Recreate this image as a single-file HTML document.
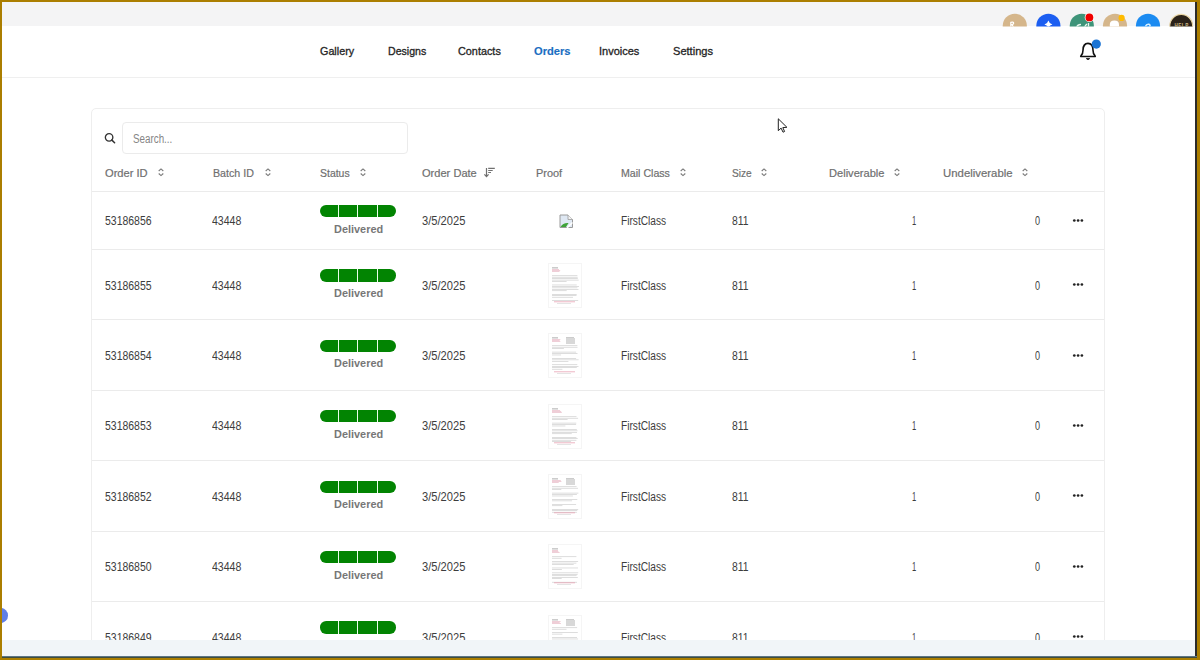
<!DOCTYPE html>
<html><head><meta charset="utf-8">
<style>
*{box-sizing:border-box}
html,body{margin:0;padding:0}
body{width:1200px;height:660px;position:relative;overflow:hidden;background:#ab7e00;font-family:"Liberation Sans",sans-serif}
.win{position:absolute;left:2px;top:2px;width:1193px;height:654px;background:#fff;overflow:hidden}
.edgeR{position:absolute;left:1195px;top:2px;width:2px;height:656px;background:#2a2a2a}
.edgeB{position:absolute;left:2px;top:656px;width:1195px;height:2px;background:linear-gradient(#5d7684 0 50%,#3e4c40 50% 100%)}
.topbar{position:absolute;left:2px;top:2px;width:1193px;height:24px;background:#f4f4f5}
.av{position:absolute;width:24px;height:24px;border-radius:50%;top:12px}
.hdrline{position:absolute;left:2px;top:77px;width:1193px;height:1px;background:#efefef}
.t{position:absolute;white-space:nowrap;transform-origin:0 0;display:inline-block}
.card{position:absolute;left:91px;top:108px;width:1014px;height:545px;border:1px solid #eeeeee;border-radius:5px;background:#fff}
.search{position:absolute;left:122px;top:122px;width:286px;height:32px;border:1px solid #ebebeb;border-radius:4px;background:#fff}
.hl{position:absolute;left:92px;width:1012px;height:1px;background:#ebebeb}
.ic{position:absolute;overflow:visible}
.bar{position:absolute;left:319.8px;width:76.3px;height:12.4px;border-radius:6.2px;background:#028402;overflow:hidden}
.bar i{position:absolute;top:0;width:1px;height:13px;background:#eaffea}
.bottombar{position:absolute;left:2px;top:640px;width:1193px;height:16px;background:#f1f5f8}
</style></head><body>
<div class="win"></div>
<div style="position:absolute;left:2px;top:2px;width:1193px;height:654px;overflow:hidden"><div style="position:absolute;left:-2px;top:-2px;width:1200px;height:660px">
<div class="topbar"></div>
<svg class="ic" style="left:2px;top:2px" width="1193" height="26" viewBox="0 0 1193 26">
 <defs><clipPath id="tc"><rect x="0" y="0" width="1193" height="24.5"/></clipPath></defs>
 <g clip-path="url(#tc)"><g transform="translate(-2,-2)">
  <circle cx="1014.8" cy="25.8" r="12.1" fill="#d5b68b"/>
  <path d="M1010.8 27.5 V22.4 Q1013.4 21.4 1013.7 23.2 Q1013.4 24.6 1011.8 24.6 L1013.8 27.5" fill="none" stroke="#fff" stroke-width="1.2"/>
  <circle cx="1048.4" cy="25.8" r="12.1" fill="#1c5ef1"/>
  <path d="M1048.4 20.6 Q1049.1 23.6 1052.4 24.4 Q1049.1 25.2 1048.4 28.2 Q1047.7 25.2 1044.4 24.4 Q1047.7 23.6 1048.4 20.6 Z" fill="#fff"/>
  <circle cx="1081.8" cy="25.8" r="12.1" fill="#3e9479"/>
  <path d="M1076.5 27.5 Q1077.8 24.3 1081 24.6 M1084.2 27.5 L1086.8 23.8 M1088.5 23 V27.5" fill="none" stroke="#e9f5ef" stroke-width="1.4"/>
  <circle cx="1089.4" cy="17.4" r="4.7" fill="#fff"/>
  <circle cx="1089.4" cy="17.4" r="3.9" fill="#f00000"/>
  <circle cx="1115" cy="25.8" r="12.1" fill="#d5b68b"/>
  <path d="M1109.8 27.5 V24.8 Q1109.8 20.6 1114.4 20.6 Q1119 20.6 1119 24.8 V27.5 Z" fill="#fff"/>
  <circle cx="1121.6" cy="17.9" r="3.1" fill="#ffbb00"/>
  <circle cx="1148" cy="25.8" r="12.1" fill="#1b8bf1"/>
  <path d="M1145.4 26.6 Q1146.4 23.8 1148.8 24.2 Q1150.8 24.9 1149.6 26.8 Q1147.8 28.6 1146 27.9" fill="none" stroke="#d8f0ff" stroke-width="1.5"/>
  <circle cx="1181.2" cy="25.8" r="11.4" fill="#2b2219" stroke="#e9d6a6" stroke-width="1.1"/>
  <text x="1181.6" y="26.6" font-family="Liberation Sans" font-size="4.6" font-weight="700" fill="#cdb985" text-anchor="middle" letter-spacing="0.5">HELP</text>
 </g></g>
</svg>
<div class="hdrline"></div>
<div class="card"></div>
<div class="search"></div>
<svg class="ic" style="left:104px;top:132px" width="13" height="13" viewBox="0 0 13 13"><circle cx="5.1" cy="5.3" r="3.75" fill="none" stroke="#333" stroke-width="1.35"/><path d="M7.9 8.1 L10.6 10.8" stroke="#333" stroke-width="1.5" stroke-linecap="round"/></svg>
<div class="hl" style="top:191px"></div>
<div class="hl" style="top:249px"></div>
<div class="hl" style="top:319px"></div>
<div class="hl" style="top:390px"></div>
<div class="hl" style="top:460px"></div>
<div class="hl" style="top:531px"></div>
<div class="hl" style="top:601px"></div>
<svg class="ic" style="left:156.7px;top:166px" width="8" height="12" viewBox="0 0 8 12"><path d="M1.7 5.0 L4 2.95 L6.3 5.0 M1.7 7.5 L4 9.6 L6.3 7.5" fill="none" stroke="#7a7a7a" stroke-width="1.1"/></svg>
<svg class="ic" style="left:263.5px;top:166px" width="8" height="12" viewBox="0 0 8 12"><path d="M1.7 5.0 L4 2.95 L6.3 5.0 M1.7 7.5 L4 9.6 L6.3 7.5" fill="none" stroke="#7a7a7a" stroke-width="1.1"/></svg>
<svg class="ic" style="left:359.2px;top:166px" width="8" height="12" viewBox="0 0 8 12"><path d="M1.7 5.0 L4 2.95 L6.3 5.0 M1.7 7.5 L4 9.6 L6.3 7.5" fill="none" stroke="#7a7a7a" stroke-width="1.1"/></svg>
<svg class="ic" style="left:679.3px;top:166px" width="8" height="12" viewBox="0 0 8 12"><path d="M1.7 5.0 L4 2.95 L6.3 5.0 M1.7 7.5 L4 9.6 L6.3 7.5" fill="none" stroke="#7a7a7a" stroke-width="1.1"/></svg>
<svg class="ic" style="left:760.2px;top:166px" width="8" height="12" viewBox="0 0 8 12"><path d="M1.7 5.0 L4 2.95 L6.3 5.0 M1.7 7.5 L4 9.6 L6.3 7.5" fill="none" stroke="#7a7a7a" stroke-width="1.1"/></svg>
<svg class="ic" style="left:892.9px;top:166px" width="8" height="12" viewBox="0 0 8 12"><path d="M1.7 5.0 L4 2.95 L6.3 5.0 M1.7 7.5 L4 9.6 L6.3 7.5" fill="none" stroke="#7a7a7a" stroke-width="1.1"/></svg>
<svg class="ic" style="left:1021.1px;top:166px" width="8" height="12" viewBox="0 0 8 12"><path d="M1.7 5.0 L4 2.95 L6.3 5.0 M1.7 7.5 L4 9.6 L6.3 7.5" fill="none" stroke="#7a7a7a" stroke-width="1.1"/></svg>
<svg class="ic" style="left:482px;top:165px" width="16" height="14" viewBox="0 0 16 14"><path d="M4.5 3 V11.5 M2.4 9.3 L4.5 11.6 L6.6 9.3" fill="none" stroke="#707070" stroke-width="1.2"/><path d="M6.2 3.4 H12.8 M6.2 5.5 H10.7 M6.2 7.5 H9" fill="none" stroke="#707070" stroke-width="1.2"/></svg>
<div class="bar" style="top:204.9px"><i style="left:18.1px"></i><i style="left:37.5px"></i><i style="left:57px"></i></div>
<div class="bar" style="top:269.3px"><i style="left:18.1px"></i><i style="left:37.5px"></i><i style="left:57px"></i></div>
<div class="bar" style="top:339.7px"><i style="left:18.1px"></i><i style="left:37.5px"></i><i style="left:57px"></i></div>
<div class="bar" style="top:410.1px"><i style="left:18.1px"></i><i style="left:37.5px"></i><i style="left:57px"></i></div>
<div class="bar" style="top:480.5px"><i style="left:18.1px"></i><i style="left:37.5px"></i><i style="left:57px"></i></div>
<div class="bar" style="top:550.9px"><i style="left:18.1px"></i><i style="left:37.5px"></i><i style="left:57px"></i></div>
<div class="bar" style="top:621.3px"><i style="left:18.1px"></i><i style="left:37.5px"></i><i style="left:57px"></i></div>
<svg class="ic" style="left:1072px;top:217.8px" width="13" height="5" viewBox="0 0 13 5"><circle cx="2.3" cy="2.5" r="1.35" fill="#222"/><circle cx="6.1" cy="2.5" r="1.35" fill="#222"/><circle cx="9.9" cy="2.5" r="1.35" fill="#222"/></svg>
<svg class="ic" style="left:1072px;top:282.2px" width="13" height="5" viewBox="0 0 13 5"><circle cx="2.3" cy="2.5" r="1.35" fill="#222"/><circle cx="6.1" cy="2.5" r="1.35" fill="#222"/><circle cx="9.9" cy="2.5" r="1.35" fill="#222"/></svg>
<svg class="ic" style="left:1072px;top:352.6px" width="13" height="5" viewBox="0 0 13 5"><circle cx="2.3" cy="2.5" r="1.35" fill="#222"/><circle cx="6.1" cy="2.5" r="1.35" fill="#222"/><circle cx="9.9" cy="2.5" r="1.35" fill="#222"/></svg>
<svg class="ic" style="left:1072px;top:423.0px" width="13" height="5" viewBox="0 0 13 5"><circle cx="2.3" cy="2.5" r="1.35" fill="#222"/><circle cx="6.1" cy="2.5" r="1.35" fill="#222"/><circle cx="9.9" cy="2.5" r="1.35" fill="#222"/></svg>
<svg class="ic" style="left:1072px;top:493.4px" width="13" height="5" viewBox="0 0 13 5"><circle cx="2.3" cy="2.5" r="1.35" fill="#222"/><circle cx="6.1" cy="2.5" r="1.35" fill="#222"/><circle cx="9.9" cy="2.5" r="1.35" fill="#222"/></svg>
<svg class="ic" style="left:1072px;top:563.8px" width="13" height="5" viewBox="0 0 13 5"><circle cx="2.3" cy="2.5" r="1.35" fill="#222"/><circle cx="6.1" cy="2.5" r="1.35" fill="#222"/><circle cx="9.9" cy="2.5" r="1.35" fill="#222"/></svg>
<svg class="ic" style="left:1072px;top:634.2px" width="13" height="5" viewBox="0 0 13 5"><circle cx="2.3" cy="2.5" r="1.35" fill="#222"/><circle cx="6.1" cy="2.5" r="1.35" fill="#222"/><circle cx="9.9" cy="2.5" r="1.35" fill="#222"/></svg>
<svg class="ic" style="left:548px;top:262.7px" width="34" height="45" viewBox="0 0 34 45"><rect x="0.5" y="0.5" width="33" height="44" fill="#fff" stroke="#f5f5f5"/><rect x="4" y="4.5" width="6" height="0.8" fill="#9a9a9a"/><rect x="4" y="6.0" width="7.0" height="0.55" fill="#e2a6b6"/><rect x="4" y="7.0" width="8.2" height="0.55" fill="#e2a6b6"/><rect x="4" y="8.0" width="7.5" height="0.55" fill="#e2a6b6"/><rect x="4" y="12.5" width="25.4" height="0.55" fill="#c2c2c2"/><rect x="4" y="13.9" width="25.7" height="0.55" fill="#c2c2c2"/><rect x="4" y="15.4" width="25.8" height="0.55" fill="#c2c2c2"/><rect x="4" y="16.8" width="26.7" height="0.55" fill="#c2c2c2"/><rect x="4" y="18.3" width="14.6" height="0.55" fill="#c2c2c2"/><rect x="4" y="21.7" width="24.7" height="0.55" fill="#c2c2c2"/><rect x="4" y="23.2" width="27.0" height="0.55" fill="#c2c2c2"/><rect x="4" y="24.6" width="25.4" height="0.55" fill="#c2c2c2"/><rect x="4" y="26.1" width="26.5" height="0.55" fill="#c2c2c2"/><rect x="4" y="27.5" width="14.7" height="0.55" fill="#c2c2c2"/><rect x="4" y="31.0" width="24.7" height="0.55" fill="#c2c2c2"/><rect x="4" y="32.4" width="24.5" height="0.55" fill="#c2c2c2"/><rect x="4" y="33.9" width="21.0" height="0.55" fill="#c2c2c2"/><rect x="4" y="37.4" width="26.2" height="0.55" fill="#c2c2c2"/><rect x="6" y="38.5" width="21" height="0.7" fill="#e596aa"/><rect x="9" y="40" width="14" height="0.5" fill="#c8c8c8"/></svg>
<svg class="ic" style="left:548px;top:333.1px" width="34" height="45" viewBox="0 0 34 45"><rect x="0.5" y="0.5" width="33" height="44" fill="#fff" stroke="#f5f5f5"/><rect x="4" y="4.5" width="6" height="0.8" fill="#9a9a9a"/><rect x="4" y="6.0" width="8.3" height="0.55" fill="#e2a6b6"/><rect x="4" y="7.0" width="7.7" height="0.55" fill="#e2a6b6"/><rect x="4" y="8.0" width="8.3" height="0.55" fill="#e2a6b6"/><rect x="18" y="5" width="9" height="6" fill="#d8d8d8"/><rect x="18" y="4" width="8" height="0.6" fill="#aaa"/><rect x="4" y="12.5" width="25.4" height="0.55" fill="#c2c2c2"/><rect x="4" y="13.9" width="25.5" height="0.55" fill="#c2c2c2"/><rect x="4" y="15.4" width="11.9" height="0.55" fill="#c2c2c2"/><rect x="4" y="18.8" width="24.1" height="0.55" fill="#c2c2c2"/><rect x="4" y="20.3" width="25.5" height="0.55" fill="#c2c2c2"/><rect x="4" y="21.7" width="9.1" height="0.55" fill="#c2c2c2"/><rect x="4" y="25.2" width="24.1" height="0.55" fill="#c2c2c2"/><rect x="4" y="26.6" width="26.6" height="0.55" fill="#c2c2c2"/><rect x="4" y="28.1" width="16.4" height="0.55" fill="#c2c2c2"/><rect x="4" y="31.5" width="25.3" height="0.55" fill="#c2c2c2"/><rect x="4" y="33.0" width="26.5" height="0.55" fill="#c2c2c2"/><rect x="4" y="34.4" width="24.8" height="0.55" fill="#c2c2c2"/><rect x="4" y="35.9" width="10.4" height="0.55" fill="#c2c2c2"/><rect x="6" y="38.5" width="21" height="0.7" fill="#e596aa"/><rect x="9" y="40" width="14" height="0.5" fill="#c8c8c8"/></svg>
<svg class="ic" style="left:548px;top:403.5px" width="34" height="45" viewBox="0 0 34 45"><rect x="0.5" y="0.5" width="33" height="44" fill="#fff" stroke="#f5f5f5"/><rect x="4" y="4.5" width="6" height="0.8" fill="#9a9a9a"/><rect x="4" y="6.0" width="8.1" height="0.55" fill="#e2a6b6"/><rect x="4" y="7.0" width="9.2" height="0.55" fill="#e2a6b6"/><rect x="4" y="8.0" width="9.8" height="0.55" fill="#e2a6b6"/><rect x="4" y="12.5" width="24.5" height="0.55" fill="#c2c2c2"/><rect x="4" y="13.9" width="26.1" height="0.55" fill="#c2c2c2"/><rect x="4" y="15.4" width="15.6" height="0.55" fill="#c2c2c2"/><rect x="4" y="18.8" width="24.3" height="0.55" fill="#c2c2c2"/><rect x="4" y="20.3" width="24.1" height="0.55" fill="#c2c2c2"/><rect x="4" y="21.7" width="13.4" height="0.55" fill="#c2c2c2"/><rect x="4" y="25.2" width="24.8" height="0.55" fill="#c2c2c2"/><rect x="4" y="26.6" width="25.5" height="0.55" fill="#c2c2c2"/><rect x="4" y="28.1" width="25.0" height="0.55" fill="#c2c2c2"/><rect x="4" y="29.5" width="19.8" height="0.55" fill="#c2c2c2"/><rect x="4" y="33.0" width="24.4" height="0.55" fill="#c2c2c2"/><rect x="4" y="34.4" width="25.7" height="0.55" fill="#c2c2c2"/><rect x="4" y="35.9" width="24.4" height="0.55" fill="#c2c2c2"/><rect x="4" y="37.4" width="19.1" height="0.55" fill="#c2c2c2"/><rect x="6" y="38.5" width="21" height="0.7" fill="#e596aa"/><rect x="9" y="40" width="14" height="0.5" fill="#c8c8c8"/></svg>
<svg class="ic" style="left:548px;top:473.9px" width="34" height="45" viewBox="0 0 34 45"><rect x="0.5" y="0.5" width="33" height="44" fill="#fff" stroke="#f5f5f5"/><rect x="4" y="4.5" width="6" height="0.8" fill="#9a9a9a"/><rect x="4" y="6.0" width="8.8" height="0.55" fill="#e2a6b6"/><rect x="4" y="7.0" width="9.4" height="0.55" fill="#e2a6b6"/><rect x="4" y="8.0" width="6.7" height="0.55" fill="#e2a6b6"/><rect x="18" y="5" width="9" height="6" fill="#d8d8d8"/><rect x="18" y="4" width="8" height="0.6" fill="#aaa"/><rect x="4" y="12.5" width="24.6" height="0.55" fill="#c2c2c2"/><rect x="4" y="13.9" width="26.0" height="0.55" fill="#c2c2c2"/><rect x="4" y="15.4" width="9.3" height="0.55" fill="#c2c2c2"/><rect x="4" y="18.8" width="26.4" height="0.55" fill="#c2c2c2"/><rect x="4" y="20.3" width="24.9" height="0.55" fill="#c2c2c2"/><rect x="4" y="21.7" width="20.9" height="0.55" fill="#c2c2c2"/><rect x="4" y="25.2" width="25.3" height="0.55" fill="#c2c2c2"/><rect x="4" y="26.6" width="20.1" height="0.55" fill="#c2c2c2"/><rect x="4" y="30.1" width="24.1" height="0.55" fill="#c2c2c2"/><rect x="4" y="31.5" width="10.4" height="0.55" fill="#c2c2c2"/><rect x="4" y="35.0" width="26.2" height="0.55" fill="#c2c2c2"/><rect x="4" y="36.4" width="25.3" height="0.55" fill="#c2c2c2"/><rect x="4" y="37.9" width="24.9" height="0.55" fill="#c2c2c2"/><rect x="6" y="38.5" width="21" height="0.7" fill="#e596aa"/><rect x="9" y="40" width="14" height="0.5" fill="#c8c8c8"/></svg>
<svg class="ic" style="left:548px;top:544.3px" width="34" height="45" viewBox="0 0 34 45"><rect x="0.5" y="0.5" width="33" height="44" fill="#fff" stroke="#f5f5f5"/><rect x="4" y="4.5" width="6" height="0.8" fill="#9a9a9a"/><rect x="4" y="6.0" width="6.0" height="0.55" fill="#e2a6b6"/><rect x="4" y="7.0" width="6.4" height="0.55" fill="#e2a6b6"/><rect x="4" y="8.0" width="7.6" height="0.55" fill="#e2a6b6"/><rect x="4" y="12.5" width="24.4" height="0.55" fill="#c2c2c2"/><rect x="4" y="13.9" width="9.6" height="0.55" fill="#c2c2c2"/><rect x="4" y="17.4" width="26.1" height="0.55" fill="#c2c2c2"/><rect x="4" y="18.8" width="24.4" height="0.55" fill="#c2c2c2"/><rect x="4" y="20.3" width="21.7" height="0.55" fill="#c2c2c2"/><rect x="4" y="23.7" width="26.0" height="0.55" fill="#c2c2c2"/><rect x="4" y="25.2" width="9.9" height="0.55" fill="#c2c2c2"/><rect x="4" y="28.6" width="26.2" height="0.55" fill="#c2c2c2"/><rect x="4" y="30.1" width="25.6" height="0.55" fill="#c2c2c2"/><rect x="4" y="31.5" width="24.6" height="0.55" fill="#c2c2c2"/><rect x="4" y="33.0" width="25.8" height="0.55" fill="#c2c2c2"/><rect x="4" y="34.4" width="9.7" height="0.55" fill="#c2c2c2"/><rect x="4" y="37.9" width="25.0" height="0.55" fill="#c2c2c2"/><rect x="6" y="38.5" width="21" height="0.7" fill="#e596aa"/><rect x="9" y="40" width="14" height="0.5" fill="#c8c8c8"/></svg>
<svg class="ic" style="left:548px;top:614.7px" width="34" height="45" viewBox="0 0 34 45"><rect x="0.5" y="0.5" width="33" height="44" fill="#fff" stroke="#f5f5f5"/><rect x="4" y="4.5" width="6" height="0.8" fill="#9a9a9a"/><rect x="4" y="6.0" width="8.6" height="0.55" fill="#e2a6b6"/><rect x="4" y="7.0" width="7.7" height="0.55" fill="#e2a6b6"/><rect x="4" y="8.0" width="8.9" height="0.55" fill="#e2a6b6"/><rect x="18" y="5" width="9" height="6" fill="#d8d8d8"/><rect x="18" y="4" width="8" height="0.6" fill="#aaa"/><rect x="4" y="12.5" width="25.1" height="0.55" fill="#c2c2c2"/><rect x="4" y="13.9" width="14.5" height="0.55" fill="#c2c2c2"/><rect x="4" y="17.4" width="25.8" height="0.55" fill="#c2c2c2"/><rect x="4" y="18.8" width="10.4" height="0.55" fill="#c2c2c2"/><rect x="4" y="22.3" width="25.0" height="0.55" fill="#c2c2c2"/><rect x="4" y="23.7" width="26.1" height="0.55" fill="#c2c2c2"/><rect x="4" y="25.2" width="16.7" height="0.55" fill="#c2c2c2"/><rect x="4" y="28.6" width="25.4" height="0.55" fill="#c2c2c2"/><rect x="4" y="30.1" width="26.9" height="0.55" fill="#c2c2c2"/><rect x="4" y="31.5" width="16.2" height="0.55" fill="#c2c2c2"/><rect x="4" y="35.0" width="26.8" height="0.55" fill="#c2c2c2"/><rect x="4" y="36.4" width="24.3" height="0.55" fill="#c2c2c2"/><rect x="4" y="37.9" width="14.8" height="0.55" fill="#c2c2c2"/><rect x="6" y="38.5" width="21" height="0.7" fill="#e596aa"/><rect x="9" y="40" width="14" height="0.5" fill="#c8c8c8"/></svg>
<svg class="ic" style="left:558.5px;top:213.5px" width="15" height="15" viewBox="0 0 15 15"><path d="M1 1 H9 L13.5 5.5 V13.5 H1 Z" fill="#dfe8f3" stroke="#9a9a9a" stroke-width="1"/><path d="M1.5 13 Q4 8.5 9.5 9 L7 13 Z" fill="#3fa33a"/><path d="M9 1 V5.5 H13.5" fill="#f3f3f3" stroke="#9a9a9a" stroke-width="0.8"/><path d="M8 14 L13.5 8.5" stroke="#fff" stroke-width="1.5"/></svg>
<span class="t" style="left:320.00px;top:45.55px;font-size:11.4px;line-height:11.4px;font-weight:400;color:#252525;transform:scaleX(0.9455);-webkit-text-stroke:0.32px #252525">Gallery</span>
<span class="t" style="left:387.50px;top:45.55px;font-size:11.4px;line-height:11.4px;font-weight:400;color:#252525;transform:scaleX(0.9287);-webkit-text-stroke:0.32px #252525">Designs</span>
<span class="t" style="left:458.20px;top:45.55px;font-size:11.4px;line-height:11.4px;font-weight:400;color:#252525;transform:scaleX(0.9524);-webkit-text-stroke:0.32px #252525">Contacts</span>
<span class="t" style="left:534.00px;top:45.55px;font-size:11.4px;line-height:11.4px;font-weight:700;color:#1b6ec2;transform:scaleX(0.9779);-webkit-text-stroke:0.15px #1b6ec2">Orders</span>
<span class="t" style="left:598.64px;top:45.55px;font-size:11.4px;line-height:11.4px;font-weight:400;color:#252525;transform:scaleX(0.9637);-webkit-text-stroke:0.32px #252525">Invoices</span>
<span class="t" style="left:672.80px;top:45.55px;font-size:11.4px;line-height:11.4px;font-weight:400;color:#252525;transform:scaleX(0.9720);-webkit-text-stroke:0.32px #252525">Settings</span>
<span class="t" style="left:133.00px;top:132.94px;font-size:12px;line-height:12px;font-weight:400;color:#858585;transform:scaleX(0.8178)">Search...</span>
<span class="t" style="left:104.50px;top:167.83px;font-size:11.3px;line-height:11.3px;font-weight:400;color:#6f6f6f;transform:scaleX(0.9848);-webkit-text-stroke:0.2px #6f6f6f">Order ID</span>
<span class="t" style="left:213.00px;top:167.83px;font-size:11.3px;line-height:11.3px;font-weight:400;color:#6f6f6f;transform:scaleX(0.9441);-webkit-text-stroke:0.2px #6f6f6f">Batch ID</span>
<span class="t" style="left:320.00px;top:167.83px;font-size:11.3px;line-height:11.3px;font-weight:400;color:#6f6f6f;transform:scaleX(0.9266);-webkit-text-stroke:0.2px #6f6f6f">Status</span>
<span class="t" style="left:421.75px;top:167.83px;font-size:11.3px;line-height:11.3px;font-weight:400;color:#6f6f6f;transform:scaleX(0.9803);-webkit-text-stroke:0.2px #6f6f6f">Order Date</span>
<span class="t" style="left:535.50px;top:167.83px;font-size:11.3px;line-height:11.3px;font-weight:400;color:#6f6f6f;transform:scaleX(0.9690);-webkit-text-stroke:0.2px #6f6f6f">Proof</span>
<span class="t" style="left:621.25px;top:167.83px;font-size:11.3px;line-height:11.3px;font-weight:400;color:#6f6f6f;transform:scaleX(0.9390);-webkit-text-stroke:0.2px #6f6f6f">Mail Class</span>
<span class="t" style="left:732.00px;top:167.83px;font-size:11.3px;line-height:11.3px;font-weight:400;color:#6f6f6f;transform:scaleX(0.8989);-webkit-text-stroke:0.2px #6f6f6f">Size</span>
<span class="t" style="left:828.80px;top:167.83px;font-size:11.3px;line-height:11.3px;font-weight:400;color:#6f6f6f;transform:scaleX(0.9817);-webkit-text-stroke:0.2px #6f6f6f">Deliverable</span>
<span class="t" style="left:942.70px;top:167.83px;font-size:11.3px;line-height:11.3px;font-weight:400;color:#6f6f6f;transform:scaleX(1.0073);-webkit-text-stroke:0.2px #6f6f6f">Undeliverable</span>
<span class="t" style="left:104.75px;top:215.24px;font-size:12px;line-height:12px;font-weight:400;color:#3d3d3d;transform:scaleX(0.8722)">53186856</span>
<span class="t" style="left:212.25px;top:215.24px;font-size:12px;line-height:12px;font-weight:400;color:#3d3d3d;transform:scaleX(0.8799)">43448</span>
<span class="t" style="left:421.70px;top:215.24px;font-size:12px;line-height:12px;font-weight:400;color:#3d3d3d;transform:scaleX(0.9291)">3/5/2025</span>
<span class="t" style="left:620.50px;top:215.24px;font-size:12px;line-height:12px;font-weight:400;color:#3d3d3d;transform:scaleX(0.8475)">FirstClass</span>
<span class="t" style="left:732.20px;top:215.24px;font-size:12px;line-height:12px;font-weight:400;color:#3d3d3d;transform:scaleX(0.8634)">811</span>
<span class="t" style="left:911.90px;top:215.24px;font-size:12px;line-height:12px;font-weight:400;color:#3d3d3d;transform:scaleX(0.6286)">1</span>
<span class="t" style="left:1035.00px;top:215.24px;font-size:12px;line-height:12px;font-weight:400;color:#3d3d3d;transform:scaleX(0.7571)">0</span>
<span class="t" style="left:333.60px;top:223.59px;font-size:11px;line-height:11px;font-weight:700;color:#777777;transform:scaleX(0.9916)">Delivered</span>
<span class="t" style="left:104.75px;top:279.64px;font-size:12px;line-height:12px;font-weight:400;color:#3d3d3d;transform:scaleX(0.8722)">53186855</span>
<span class="t" style="left:212.25px;top:279.64px;font-size:12px;line-height:12px;font-weight:400;color:#3d3d3d;transform:scaleX(0.8799)">43448</span>
<span class="t" style="left:421.70px;top:279.64px;font-size:12px;line-height:12px;font-weight:400;color:#3d3d3d;transform:scaleX(0.9291)">3/5/2025</span>
<span class="t" style="left:620.50px;top:279.64px;font-size:12px;line-height:12px;font-weight:400;color:#3d3d3d;transform:scaleX(0.8475)">FirstClass</span>
<span class="t" style="left:732.20px;top:279.64px;font-size:12px;line-height:12px;font-weight:400;color:#3d3d3d;transform:scaleX(0.8634)">811</span>
<span class="t" style="left:911.90px;top:279.64px;font-size:12px;line-height:12px;font-weight:400;color:#3d3d3d;transform:scaleX(0.6286)">1</span>
<span class="t" style="left:1035.00px;top:279.64px;font-size:12px;line-height:12px;font-weight:400;color:#3d3d3d;transform:scaleX(0.7571)">0</span>
<span class="t" style="left:333.60px;top:287.99px;font-size:11px;line-height:11px;font-weight:700;color:#777777;transform:scaleX(0.9916)">Delivered</span>
<span class="t" style="left:104.75px;top:350.04px;font-size:12px;line-height:12px;font-weight:400;color:#3d3d3d;transform:scaleX(0.8722)">53186854</span>
<span class="t" style="left:212.25px;top:350.04px;font-size:12px;line-height:12px;font-weight:400;color:#3d3d3d;transform:scaleX(0.8799)">43448</span>
<span class="t" style="left:421.70px;top:350.04px;font-size:12px;line-height:12px;font-weight:400;color:#3d3d3d;transform:scaleX(0.9291)">3/5/2025</span>
<span class="t" style="left:620.50px;top:350.04px;font-size:12px;line-height:12px;font-weight:400;color:#3d3d3d;transform:scaleX(0.8475)">FirstClass</span>
<span class="t" style="left:732.20px;top:350.04px;font-size:12px;line-height:12px;font-weight:400;color:#3d3d3d;transform:scaleX(0.8634)">811</span>
<span class="t" style="left:911.90px;top:350.04px;font-size:12px;line-height:12px;font-weight:400;color:#3d3d3d;transform:scaleX(0.6286)">1</span>
<span class="t" style="left:1035.00px;top:350.04px;font-size:12px;line-height:12px;font-weight:400;color:#3d3d3d;transform:scaleX(0.7571)">0</span>
<span class="t" style="left:333.60px;top:358.39px;font-size:11px;line-height:11px;font-weight:700;color:#777777;transform:scaleX(0.9916)">Delivered</span>
<span class="t" style="left:104.75px;top:420.44px;font-size:12px;line-height:12px;font-weight:400;color:#3d3d3d;transform:scaleX(0.8722)">53186853</span>
<span class="t" style="left:212.25px;top:420.44px;font-size:12px;line-height:12px;font-weight:400;color:#3d3d3d;transform:scaleX(0.8799)">43448</span>
<span class="t" style="left:421.70px;top:420.44px;font-size:12px;line-height:12px;font-weight:400;color:#3d3d3d;transform:scaleX(0.9291)">3/5/2025</span>
<span class="t" style="left:620.50px;top:420.44px;font-size:12px;line-height:12px;font-weight:400;color:#3d3d3d;transform:scaleX(0.8475)">FirstClass</span>
<span class="t" style="left:732.20px;top:420.44px;font-size:12px;line-height:12px;font-weight:400;color:#3d3d3d;transform:scaleX(0.8634)">811</span>
<span class="t" style="left:911.90px;top:420.44px;font-size:12px;line-height:12px;font-weight:400;color:#3d3d3d;transform:scaleX(0.6286)">1</span>
<span class="t" style="left:1035.00px;top:420.44px;font-size:12px;line-height:12px;font-weight:400;color:#3d3d3d;transform:scaleX(0.7571)">0</span>
<span class="t" style="left:333.60px;top:428.79px;font-size:11px;line-height:11px;font-weight:700;color:#777777;transform:scaleX(0.9916)">Delivered</span>
<span class="t" style="left:104.75px;top:490.84px;font-size:12px;line-height:12px;font-weight:400;color:#3d3d3d;transform:scaleX(0.8722)">53186852</span>
<span class="t" style="left:212.25px;top:490.84px;font-size:12px;line-height:12px;font-weight:400;color:#3d3d3d;transform:scaleX(0.8799)">43448</span>
<span class="t" style="left:421.70px;top:490.84px;font-size:12px;line-height:12px;font-weight:400;color:#3d3d3d;transform:scaleX(0.9291)">3/5/2025</span>
<span class="t" style="left:620.50px;top:490.84px;font-size:12px;line-height:12px;font-weight:400;color:#3d3d3d;transform:scaleX(0.8475)">FirstClass</span>
<span class="t" style="left:732.20px;top:490.84px;font-size:12px;line-height:12px;font-weight:400;color:#3d3d3d;transform:scaleX(0.8634)">811</span>
<span class="t" style="left:911.90px;top:490.84px;font-size:12px;line-height:12px;font-weight:400;color:#3d3d3d;transform:scaleX(0.6286)">1</span>
<span class="t" style="left:1035.00px;top:490.84px;font-size:12px;line-height:12px;font-weight:400;color:#3d3d3d;transform:scaleX(0.7571)">0</span>
<span class="t" style="left:333.60px;top:499.19px;font-size:11px;line-height:11px;font-weight:700;color:#777777;transform:scaleX(0.9916)">Delivered</span>
<span class="t" style="left:104.75px;top:561.24px;font-size:12px;line-height:12px;font-weight:400;color:#3d3d3d;transform:scaleX(0.8722)">53186850</span>
<span class="t" style="left:212.25px;top:561.24px;font-size:12px;line-height:12px;font-weight:400;color:#3d3d3d;transform:scaleX(0.8799)">43448</span>
<span class="t" style="left:421.70px;top:561.24px;font-size:12px;line-height:12px;font-weight:400;color:#3d3d3d;transform:scaleX(0.9291)">3/5/2025</span>
<span class="t" style="left:620.50px;top:561.24px;font-size:12px;line-height:12px;font-weight:400;color:#3d3d3d;transform:scaleX(0.8475)">FirstClass</span>
<span class="t" style="left:732.20px;top:561.24px;font-size:12px;line-height:12px;font-weight:400;color:#3d3d3d;transform:scaleX(0.8634)">811</span>
<span class="t" style="left:911.90px;top:561.24px;font-size:12px;line-height:12px;font-weight:400;color:#3d3d3d;transform:scaleX(0.6286)">1</span>
<span class="t" style="left:1035.00px;top:561.24px;font-size:12px;line-height:12px;font-weight:400;color:#3d3d3d;transform:scaleX(0.7571)">0</span>
<span class="t" style="left:333.60px;top:569.59px;font-size:11px;line-height:11px;font-weight:700;color:#777777;transform:scaleX(0.9916)">Delivered</span>
<span class="t" style="left:104.75px;top:631.64px;font-size:12px;line-height:12px;font-weight:400;color:#3d3d3d;transform:scaleX(0.8722)">53186849</span>
<span class="t" style="left:212.25px;top:631.64px;font-size:12px;line-height:12px;font-weight:400;color:#3d3d3d;transform:scaleX(0.8799)">43448</span>
<span class="t" style="left:421.70px;top:631.64px;font-size:12px;line-height:12px;font-weight:400;color:#3d3d3d;transform:scaleX(0.9291)">3/5/2025</span>
<span class="t" style="left:620.50px;top:631.64px;font-size:12px;line-height:12px;font-weight:400;color:#3d3d3d;transform:scaleX(0.8475)">FirstClass</span>
<span class="t" style="left:732.20px;top:631.64px;font-size:12px;line-height:12px;font-weight:400;color:#3d3d3d;transform:scaleX(0.8634)">811</span>
<span class="t" style="left:911.90px;top:631.64px;font-size:12px;line-height:12px;font-weight:400;color:#3d3d3d;transform:scaleX(0.6286)">1</span>
<span class="t" style="left:1035.00px;top:631.64px;font-size:12px;line-height:12px;font-weight:400;color:#3d3d3d;transform:scaleX(0.7571)">0</span>
<span class="t" style="left:333.60px;top:639.99px;font-size:11px;line-height:11px;font-weight:700;color:#777777;transform:scaleX(0.9916)">Delivered</span>
<svg class="ic" style="left:1078px;top:41px" width="26" height="22" viewBox="0 0 26 22">
<path d="M2.9 14.9 C4.6 13.3 5 11.4 5 9.2 C5 4.8 7.2 2.4 10 2.4 C12.8 2.4 15 4.8 15 9.2 C15 11.4 15.4 13.3 17.1 14.9 Q17.6 15.5 16.8 15.5 H3.2 Q2.4 15.5 2.9 14.9 Z" fill="none" stroke="#111" stroke-width="1.6" stroke-linejoin="round"/>
<path d="M8.3 17.6 Q10 19.8 11.7 17.6 Z" fill="#111" stroke="#111" stroke-width="0.8" stroke-linejoin="round"/>
<circle cx="18.3" cy="3.1" r="4.6" fill="#1b74d4"/>
</svg>
<svg class="ic" style="left:777px;top:118px" width="12" height="16" viewBox="0 0 12 16"><path d="M1.3 0.8 V12.7 L4.1 10.1 L6 14.2 L7.6 13.5 L5.8 9.6 L9.9 9.3 Z" fill="#fff" stroke="#222" stroke-width="1" stroke-linejoin="round"/></svg>
<div class="bottombar"></div>
<div style="position:absolute;left:-7.1px;top:608.4px;width:14.6px;height:14.6px;border-radius:50%;background:#5f7fe6"></div>
</div></div>
<div class="edgeR"></div>
<div class="edgeB"></div>
</body></html>
